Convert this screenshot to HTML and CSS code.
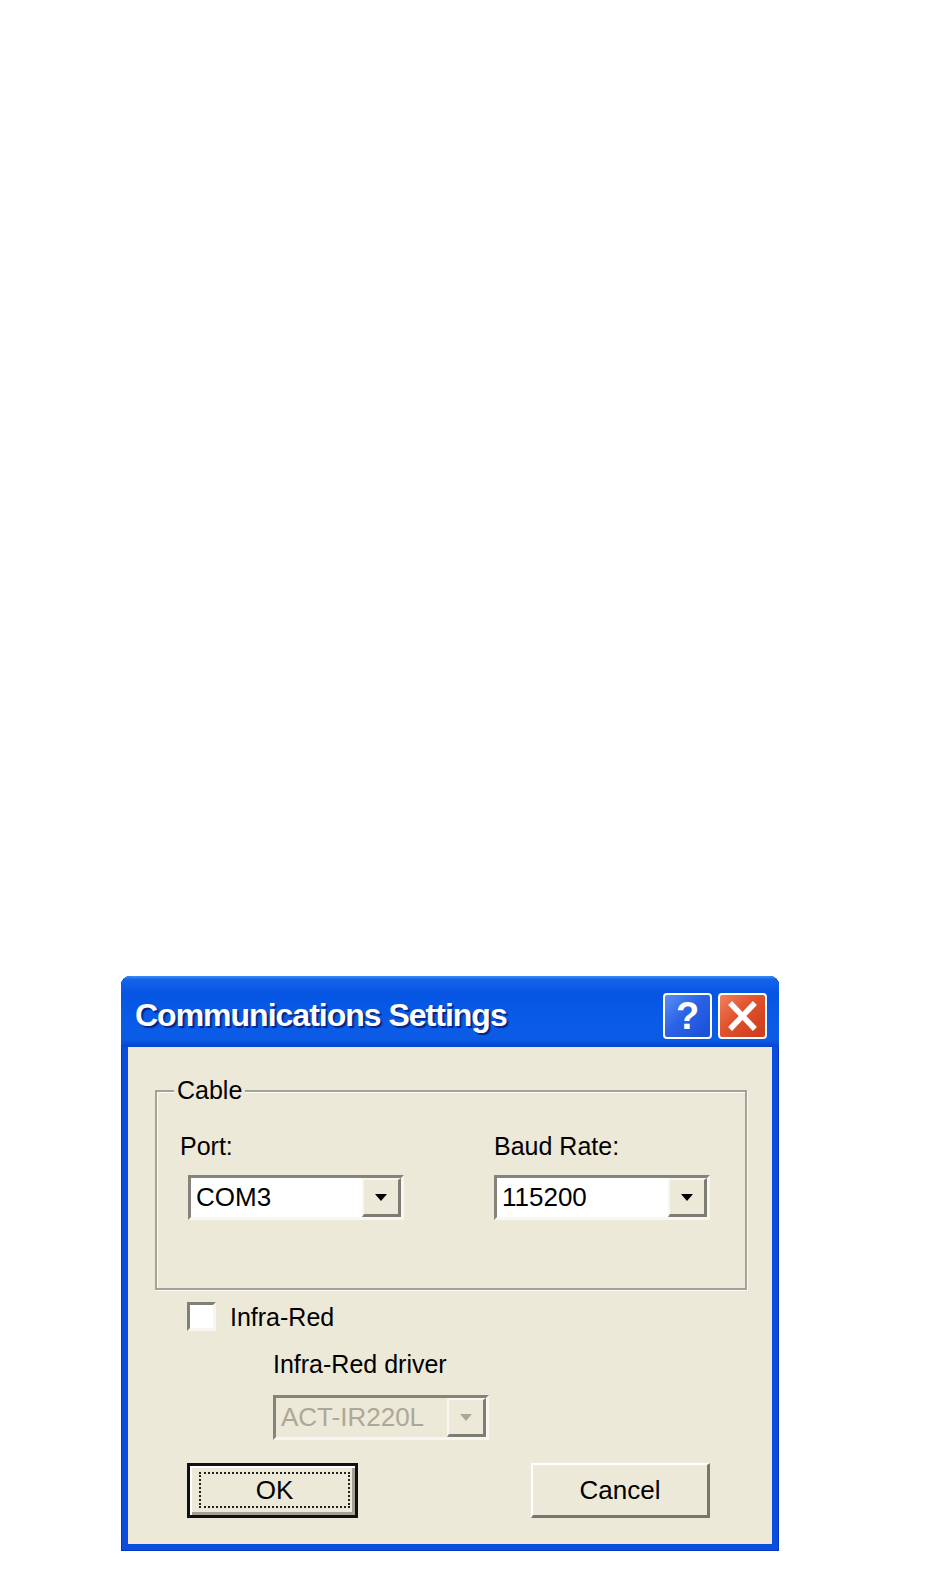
FILE: index.html
```html
<!DOCTYPE html>
<html lang="en">
<head>
  <meta charset="UTF-8">
  <title>Communications Settings</title>
  <link rel="stylesheet" href="styles.css">
</head>
<body>
  <div class="dialog">
    <div class="titlebar">
      <span class="title">Communications Settings</span>
      <div class="title-buttons">
        <button class="tb-btn tb-help">?</button>
        <button class="tb-btn tb-close">
          <svg width="49" height="46" viewBox="0 0 49 46">
            <path d="M14 12 L35 34 M35 12 L14 34" stroke="#fff" stroke-width="5.5" stroke-linecap="square" fill="none"/>
          </svg>
        </button>
      </div>
    </div>

    <div class="dialog-body">
      <div class="groupbox">
        <span class="group-title">Cable</span>
        <div class="group-grid">
          <div class="field">
            <div class="label">Port:</div>
            <div class="combo combo-port">
              <span class="combo-text">COM3</span>
              <span class="combo-arrow"><i></i></span>
            </div>
          </div>
          <div class="field">
            <div class="label">Baud Rate:</div>
            <div class="combo">
              <span class="combo-text">115200</span>
              <span class="combo-arrow"><i></i></span>
            </div>
          </div>
        </div>
      </div>

      <div class="check-row">
        <span class="checkbox"></span>
        <span class="label">Infra-Red</span>
      </div>

      <div class="ir-driver">
        <div class="label">Infra-Red driver</div>
        <div class="combo combo-disabled">
          <span class="combo-text">ACT-IR220L</span>
          <span class="combo-arrow"><i></i></span>
        </div>
      </div>

      <div class="button-row">
        <button class="btn btn-default"><span class="focus">OK</span></button>
        <button class="btn btn-cancel">Cancel</button>
      </div>
    </div>
  </div>
</body>
</html>
```

FILE: styles.css
```css
body {
  margin: 0;
  background: #ffffff;
  font-family: 'Liberation Sans', Arial, sans-serif;
  color: #000;
}

.dialog {
  display: flow-root;
  width: 658px;
  margin: 976px 0 0 121px;
  background: #0b4ddf;
  border-radius: 9px 9px 0 0;
  box-shadow: inset 0 0 0 1px #0335c0;
}

.titlebar {
  height: 71px;
  box-sizing: border-box;
  padding: 8px 12px 0 14px;
  display: flex;
  align-items: center;
  justify-content: space-between;
  border-radius: 9px 9px 0 0;
  background: linear-gradient(to bottom, #3d8ff7 0%, #1563ea 5%, #0555e2 25%, #0a5ce8 70%, #0b5ae4 90%, #0444cc 100%);
}

.title {
  color: #ffffff;
  font-weight: bold;
  font-size: 32px;
  letter-spacing: -1px;
  text-shadow: 2px 2px 1px #0b2480;
}

.title-buttons {
  display: flex;
  gap: 6px;
}

.tb-btn {
  width: 49px;
  height: 46px;
  padding: 0;
  border: 2px solid #ffffff;
  border-radius: 4px;
  display: flex;
  align-items: center;
  justify-content: center;
}

.tb-help {
  background: linear-gradient(135deg, #5a8ff5 0%, #2b63e6 45%, #1a4fd6 100%);
  color: #ffffff;
  font-family: 'Liberation Sans', Arial, sans-serif;
  font-weight: bold;
  font-size: 38px;
  line-height: 1;
}

.tb-close {
  background: linear-gradient(135deg, #f0805e 0%, #e0512d 45%, #cc3b1c 100%);
}

.tb-close svg {
  display: block;
  margin: -2px;
}

.dialog-body {
  margin: 0 7px 7px 7px;
  background: #ece9d8;
  padding: 43px 0 26px 0;
  font-size: 25px;
}

.label {
  line-height: 28px;
}

.groupbox {
  position: relative;
  margin: 0 25px 0 27px;
  height: 200px;
  box-sizing: border-box;
  border: 2px solid #a3a296;
  box-shadow: inset 1px 1px 0 #fbfaf5, 1px 1px 0 #fbfaf5;
  padding: 40px 0 0 23px;
}

.group-title {
  position: absolute;
  top: -16px;
  left: 17px;
  padding: 0 3px;
  background: #ece9d8;
  line-height: 28px;
}

.group-grid {
  display: grid;
  grid-template-columns: 314px 216px;
}

.field .combo {
  margin-top: 15px;
}

.combo-port {
  margin-left: 8px;
}

.combo {
  width: 216px;
  height: 45px;
  box-sizing: border-box;
  border: 3px solid;
  border-color: #85847a #f7f6f1 #f7f6f1 #85847a;
  background: #ffffff;
  display: flex;
  align-items: stretch;
}

.combo-text {
  flex: 1;
  padding-left: 5px;
  font-size: 26px;
  line-height: 39px;
}

.combo-arrow {
  width: 39px;
  box-sizing: border-box;
  background: #ece9d8;
  border-style: solid;
  border-width: 2px 3px 3px 2px;
  border-color: #f7f6f1 #7e7d73 #7e7d73 #f7f6f1;
  display: flex;
  align-items: center;
  justify-content: center;
}

.combo-arrow i {
  width: 0;
  height: 0;
  border-left: 6px solid transparent;
  border-right: 6px solid transparent;
  border-top: 7px solid #000;
}

.combo-disabled {
  background: #ece9d8;
}

.combo-disabled .combo-text {
  color: #aca899;
}

.combo-disabled .combo-arrow i {
  border-top-color: #aca899;
}

.check-row {
  display: flex;
  align-items: center;
  gap: 14px;
  margin: 12px 0 0 59px;
}

.checkbox {
  width: 29px;
  height: 29px;
  box-sizing: border-box;
  border: 3px solid;
  border-color: #808075 #f7f6f1 #f7f6f1 #808075;
  background: #ffffff;
}

.ir-driver {
  margin: 19px 0 0 145px;
}

.ir-driver .combo {
  margin-top: 17px;
}

.button-row {
  display: flex;
  justify-content: space-between;
  margin: 23px 62px 0 59px;
}

.btn {
  height: 55px;
  box-sizing: border-box;
  background: #ece9d8;
  font-family: 'Liberation Sans', Arial, sans-serif;
  font-size: 26px;
  color: #000;
  padding: 0;
}

.btn-default {
  width: 171px;
  border: 3px solid #111111;
  box-shadow: inset 2px 2px 0 #ffffff, inset -3px -3px 0 #a4a296;
  padding: 6px 5px 7px 9px;
}

.btn-default .focus {
  display: flex;
  align-items: center;
  justify-content: center;
  height: 100%;
  box-sizing: border-box;
  border: 2px dotted #222;
}

.btn-cancel {
  width: 179px;
  border-style: solid;
  border-width: 2px 3px 3px 2px;
  border-color: #ffffff #77766c #77766c #ffffff;
}
```
